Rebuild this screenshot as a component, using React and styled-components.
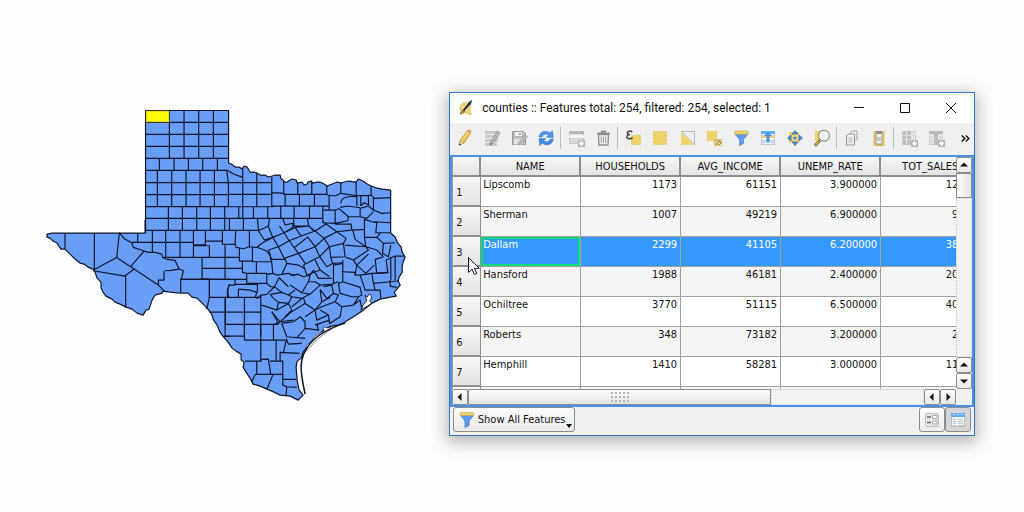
import React, { useState } from 'react'
import styled, { createGlobalStyle, css } from 'styled-components'

const rows = [
  { name: 'Lipscomb', households: 1173, income: 61151, rate: '3.900000', sales: 12482 },
  { name: 'Sherman', households: 1007, income: 49219, rate: '6.900000', sales: 9317 },
  { name: 'Dallam', households: 2299, income: 41105, rate: '6.200000', sales: 38264 },
  { name: 'Hansford', households: 1988, income: 46181, rate: '2.400000', sales: 20715 },
  { name: 'Ochiltree', households: 3770, income: 51115, rate: '6.500000', sales: 40538 },
  { name: 'Roberts', households: 348, income: 73182, rate: '3.200000', sales: 2046 },
  { name: 'Hemphill', households: 1410, income: 58281, rate: '3.000000', sales: 11930 },
]

const columns = ['NAME', 'HOUSEHOLDS', 'AVG_INCOME', 'UNEMP_RATE', 'TOT_SALES']

function App() {
  const [selected, setSelected] = useState(2)

  return (
    <>
      <GlobalStyle />
      <Page>
        <CountyMap />
        <Window>
          <TitleBar>
            <AppIcon />
            <Title>counties :: Features total: 254, filtered: 254, selected: 1</Title>
            <WindowButton aria-label="Minimize">
              <svg width="12" height="12" viewBox="0 0 12 12"><path d="M1 5.500h10" /></svg>
            </WindowButton>
            <WindowButton aria-label="Maximize">
              <svg width="12" height="12" viewBox="0 0 12 12"><path d="M1.500 1.500h9v9h-9z" /></svg>
            </WindowButton>
            <WindowButton aria-label="Close">
              <svg width="12" height="12" viewBox="0 0 12 12"><path d="M1 1l10 10M11 1L1 11" /></svg>
            </WindowButton>
          </TitleBar>

          <Toolbar />

          <Frame>
            <Viewport>
              <Table>
                <colgroup>
                  <col style={{ width: 28 }} />
                  {columns.map((c) => <col key={c} style={{ width: 100 }} />)}
                </colgroup>
                <thead>
                  <tr>
                    <HeadCell aria-label="Row" />
                    {columns.map((c) => <HeadCell key={c} scope="col">{c}</HeadCell>)}
                  </tr>
                </thead>
                <tbody>
                  {rows.map((row, i) => (
                    <Row key={row.name} $selected={i === selected} onClick={() => setSelected(i)}>
                      <RowHead scope="row">
                        {i + 1}
                        {i === 2 && <Cursor />}
                      </RowHead>
                      <Cell $current={i === selected}>{row.name}</Cell>
                      <Cell $number>{row.households}</Cell>
                      <Cell $number>{row.income}</Cell>
                      <Cell $number>{row.rate}</Cell>
                      <Cell $number>{row.sales}</Cell>
                    </Row>
                  ))}
                  <Row>
                    <RowHead />
                    {columns.map((c) => <Cell key={c} />)}
                  </Row>
                </tbody>
              </Table>
            </Viewport>
            <VerticalBar>
              <Arrow label="Scroll up" d="M4 9.500L8 5.500l4 4z" />
              <VerticalThumb />
              <Groove />
              <Arrow label="Page up" d="M4 9.500L8 5.500l4 4z" />
              <Arrow label="Scroll down" d="M4 6.500L8 10.500l4-4z" />
            </VerticalBar>
            <HorizontalBar>
              <Arrow label="Scroll left" d="M9.500 4L5.500 8l4 4z" />
              <HorizontalThumb>
                <Grip />
              </HorizontalThumb>
              <Groove />
              <Arrow label="Page left" d="M9.500 4L5.500 8l4 4z" />
              <Arrow label="Scroll right" d="M6.500 4L10.500 8l-4 4z" />
            </HorizontalBar>
          </Frame>

          <Footer>
            <FilterButton>
              <svg width="16" height="18" viewBox="0 0 16 18">
                <path d="M1.500 4.500L6 10v6.500l4-2V10l4.500-5.500z" fill="#5b9bf0" stroke="#5f88c2" />
                <rect x="1" y="1.500" width="14" height="3" rx="1" fill="#eed36c" stroke="#c9ad55" strokeWidth=".6" />
              </svg>
              Show All Features
              <MenuMark width="6" height="4" viewBox="0 0 6 4"><path d="M0 0h6L3 4z" /></MenuMark>
            </FilterButton>
            <ViewButtons>
              <ViewButton aria-label="Form view">
                <svg width="16" height="16" viewBox="0 0 16 16">
                  <rect x="1.500" y="1.500" width="13" height="13" rx="1" fill="#e6e6e6" stroke="#bdbdbd" />
                  <path d="M3 5h4M3 10.500h4" stroke="#5f6672" strokeWidth="1.600" />
                  <path d="M8.500 3.500h4.500v3H8.500zM8.500 9h4.500v3H8.500z" fill="#fff" stroke="#a9a9a9" />
                </svg>
              </ViewButton>
              <ViewButton aria-label="Table view" $pressed>
                <svg width="16" height="16" viewBox="0 0 16 16">
                  <rect x="1.500" y="1.500" width="13" height="13" fill="#f4f4f4" stroke="#b9bcc0" />
                  <path d="M1 1h14v4H1z" fill="#62aef7" />
                  <path d="M3 2.500h2M7 2.500h2M11 2.500h2" stroke="#c2e2ff" />
                  <path d="M3 7.500h3M3 9.500h3M3 11.500h3M3 13.500h3M8 7.500h5M8 9.500h5M8 11.500h5M8 13.500h5" stroke="#bfc5cb" />
                </svg>
              </ViewButton>
            </ViewButtons>
          </Footer>
        </Window>
      </Page>
    </>
  )
}

export default App

function Arrow({ label, d }) {
  return (
    <ArrowButton aria-label={label}>
      <svg width="16" height="16" viewBox="0 0 16 16"><path d={d} /></svg>
    </ArrowButton>
  )
}

function Cursor() {
  return (
    <CursorIcon width="14" height="20" viewBox="0 0 14 20">
      <path d="M1.500 1.500v15l3.500-3.400 2.400 5.400 2.400-1.100-2.300-5.100h4.800z" fill="#fff" stroke="#15182e" />
    </CursorIcon>
  )
}

function AppIcon() {
  return (
    <svg width="18" height="18" viewBox="0 0 18 18">
      <path d="M9 3.500C5 3 2.500 6.500 3 10c.5 3 3.200 4.500 6 4l4.500 2 1-1.800-2.200-1.200c2-2.500 1.500-7-.8-8.500z" fill="#efd574" stroke="#cdb04c" strokeWidth=".6" />
      <path d="M7 7.500c-2 1-2 4.300 0 4.800 2 .4 3.200-1.700 2.800-3.600" fill="#fff6c9" />
      <path d="M2.500 15.500c.4-2.500 2-4.300 3.800-5l2 1.400c-1 2-3 3.400-5.800 3.600z" fill="#a68534" />
      <path d="M6.500 11.500L13 4" stroke="#252d3b" strokeWidth="2" />
      <path d="M11 3.500L15 .8l-1 5.200z" fill="#1d4b56" />
    </svg>
  )
}

const yellow = '#eed36c'

function Badge() {
  return (
    <g>
      <rect x="12" y="12" width="7" height="7" fill="#b6b6b6" />
      <path d="M15.500 13v5M13 15.500h5M13.700 13.700l3.600 3.600M17.300 13.700l-3.600 3.600" stroke="#fff" />
    </g>
  )
}

const icons = {
  'Toggle editing': (
    <>
      <path d="M4 17l1.500-5L12.500 2.500l3.200 2.300L9 15z" fill="#efc355" stroke="#b98d3a" strokeWidth=".8" />
      <path d="M12.500 2.500l3.200 2.300.8-1.700-2.300-1.700z" fill="#d98f72" />
      <path d="M5.500 12l3.200 2.600L4 17.500z" fill="#f3e2bd" stroke="#8c7443" strokeWidth=".5" />
      <path d="M4 17.600l.5-2.200 1.500 1.200z" fill="#33302a" />
      <path d="M7.200 12.500L14 3.500" stroke="#f8df8e" />
    </>
  ),
  'Multi edit': (
    <>
      <path d="M3 4.500h13M3 8.500h13M3 12.500h13M3 16.500h12" stroke="#c9c9c9" strokeWidth="3" />
      <path d="M8 17l1-3.500L15.500 3 18 4.800 11.500 15z" fill="#b6b6b6" stroke="#8d8d8d" strokeWidth=".8" />
      <path d="M8 17l.5-2 1.400 1z" fill="#555" />
    </>
  ),
  'Save edits': (
    <>
      <path d="M3.500 3.500h11l2 2v11h-13z" fill="#b9b9b9" stroke="#999" />
      <path d="M6 4h7v4H6z" fill="#f2f2f2" />
      <path d="M10 5h2v2h-2z" fill="#999" />
      <path d="M5 10.500h9v6H5z" fill="#e3e3e3" />
      <path d="M9 17l1-3 6.500-7 2 1.500L12 16z" fill="#bdbdbd" stroke="#969696" strokeWidth=".7" />
    </>
  ),
  'Reload': (
    <>
      <path d="M3 9C3.500 3.500 9.500 1.500 13.800 4.700L16.500 2.500l.8 7-7-.2 2.200-2.200C9.800 5.500 7 6.500 6.200 9z" fill="#4b95ed" stroke="#3878ca" strokeWidth=".5" />
      <path d="M17.300 11c-.5 5.500-6.500 7.500-10.800 4.300L3.800 17.500 3 10.500l7 .2-2.200 2.200c2.700 1.600 5.500.6 6.300-1.900z" fill="#3f89e4" stroke="#3878ca" strokeWidth=".5" />
    </>
  ),
  'Add feature': (
    <>
      <rect x="3.500" y="3.500" width="14" height="12" fill="#e6e6e6" stroke="#c3c3c3" />
      <path d="M3 4.500h15" stroke="#b5b5b5" strokeWidth="3" />
      <path d="M3 8.500h15" stroke="#fafafa" strokeWidth="2" />
      <path d="M4 11h13M4 13.500h13" stroke="#c3c3c3" />
      <Badge />
    </>
  ),
  'Delete': (
    <>
      <path d="M5.500 6.500h10L15 17H6z" fill="#f1f1f1" stroke="#8e8e8e" strokeWidth="1.300" />
      <path d="M4 5.500h13M8.500 5V3.500h4V5" fill="none" stroke="#828282" strokeWidth="1.300" />
      <path d="M8.300 8.500v6.500M10.500 8.500v6.500M12.700 8.500v6.500" stroke="#9a9a9a" />
    </>
  ),
  'Select by expression': (
    <>
      <path d="M8 7h10v10H8z" fill={yellow} />
      <path d="M9.300 4C7.500 2.400 4.300 3 4.300 5c0 1.200 1 1.700 2.700 1.700-2.200 0-3.200.8-3.200 2 0 2.300 4 2.700 5.800.7" fill="none" stroke="#394150" strokeWidth="1.500" />
    </>
  ),
  'Select all': <path d="M3.500 3.500h13v13h-13z" fill={yellow} stroke="#e8cd68" strokeDasharray="3 1" />,
  'Invert selection': (
    <>
      <path d="M4.500 3.500h13v13z" fill="#f0f0f0" stroke="#b9bcbf" />
      <path d="M4 4l13 13H4z" fill={yellow} />
    </>
  ),
  'Deselect': (
    <>
      <path d="M3 3h10v10H3z" fill={yellow} />
      <path d="M10 11h8v7h-8z" fill="#e5c96f" />
      <path d="M11 13l2-1 3 3 2-1M12 17l4-5M15 17l2-3" fill="none" stroke="#a37c34" />
      <path d="M12 12l5 5" stroke="#fff6cf" />
    </>
  ),
  'Filter': (
    <>
      <path d="M4 6l4.500 5.500V17.500l4-2v-4L17 6z" fill="#5b9bf0" stroke="#5f88c2" strokeWidth=".8" />
      <rect x="3.500" y="3" width="14" height="3.200" rx="1" fill={yellow} stroke="#c9ad55" strokeWidth=".6" />
    </>
  ),
  'Move selection to top': (
    <>
      <rect x="3.500" y="3.500" width="13" height="13" fill="#eef3f8" stroke="#c9c9c9" />
      <path d="M3 3h14v3H3z" fill="#69b1f4" />
      <path d="M4 7h12v3H4z" fill={yellow} />
      <path d="M4 12.500h12M4 14.500h12" stroke="#a6c8ed" />
      <path d="M10 4l4 4h-2.500v6h-3V8H6z" fill="#4a90e0" />
    </>
  ),
  'Pan to selection': (
    <>
      <path d="M4 4h10v11H4z" fill={yellow} />
      <path d="M10 2.500l3 3.500H7zM10 17.500l3-3.500H7zM2.500 10L6 7v6zM17.500 10L14 7v6z" fill="#4a8de0" stroke="#3e6ca8" strokeWidth=".8" />
      <path d="M10 8l2 2-2 2-2-2z" fill="#4a8de0" />
    </>
  ),
  'Zoom to selection': (
    <>
      <path d="M3 3h10v10H3z" fill={yellow} />
      <path d="M3 17.500l5-5" stroke="#57502f" strokeWidth="2.800" />
      <path d="M3.500 17l4-4" stroke="#f1c331" strokeWidth="1.500" />
      <circle cx="12" cy="7.800" r="5.500" fill="#f1f2ea" stroke="#8f9488" strokeWidth="1.200" />
      <path d="M8.800 7.500c.3-1.800 1.500-2.700 3-2.800" fill="none" stroke="#fff" strokeWidth="1.300" />
    </>
  ),
  'Copy rows': (
    <>
      <path d="M8 5l2-2h5v9H8z" fill="#efefef" stroke="#a6a6a6" />
      <path d="M4.500 8l2-2h6v11h-8z" fill="#efefef" stroke="#999" />
      <path d="M6.500 10h4M6.500 12h4M6.500 14h4" stroke="#b4b4b4" />
    </>
  ),
  'Paste features': (
    <>
      <path d="M5 3.500h10v14H5z" fill={yellow} stroke="#d5b756" />
      <path d="M7 5.500h6v10.500H7z" fill="#f2f2f2" stroke="#96948a" />
      <path d="M7 3h6v2.500H7z" fill="#8d8d88" />
      <path d="M8 9h4v4H8z" fill="#c6c6c6" />
    </>
  ),
  'New field': (
    <>
      <path d="M3.500 3.500h13v13h-13z" fill="#e8e8e8" stroke="#cdcdcd" />
      <path d="M4 3h3v14H4zM8 3h4v14H8z" fill="#bebebe" />
      <path d="M3 7.500h14M3 11.500h14" stroke="#dcdcdc" />
      <Badge />
    </>
  ),
  'Delete field': (
    <>
      <path d="M3.500 3.500h13v13h-13z" fill="#e3e3e3" stroke="#cdcdcd" />
      <path d="M8 3h4v14H8zM3 3h14v3H3z" fill="#b9b9b9" />
      <path d="M3 9.500h14M3 13h14" stroke="#cfcfcf" />
      <Badge />
    </>
  ),
}

const groups = [
  ['Toggle editing', 'Multi edit', 'Save edits', 'Reload'],
  ['Add feature', 'Delete'],
  ['Select by expression', 'Select all', 'Invert selection', 'Deselect', 'Filter',
    'Move selection to top', 'Pan to selection', 'Zoom to selection'],
  ['Copy rows', 'Paste features'],
  ['New field', 'Delete field'],
]

function Toolbar() {
  return (
    <Tools>
      {groups.map((group) => (
        <ToolGroup key={group[0]}>
          {group.map((label) => (
            <ToolButton key={label} aria-label={label}>
              <svg width="20" height="20" viewBox="0 0 20 20">{icons[label]}</svg>
            </ToolButton>
          ))}
        </ToolGroup>
      ))}
      <MoreButton aria-label="More tools">
        <svg width="9" height="7" viewBox="0 0 9 7">
          <path d="M.8.5l3 3-3 3M4.800.5l3 3-3 3" fill="none" stroke="#111" strokeWidth="1.400" />
        </svg>
      </MoreButton>
    </Tools>
  )
}

const state = `M145.500 110.500H228.500V163
  L231 164 235 167 239 167 242 169 244 166 247 167 250 172 254 172 257 173 260 175 265 175 268 177 272 176 275 175 280 175
  281 179 283 180 284 182 287 182 290 180 292 179 296 180 297 183 302 182 304 185 307 184 308 182 311 181 312 183 317 182 320 182
  324 184 327 186 332 184 337 182 341 183 348 181 356 182 358 179 363 181 367 184 371 186 377 188 382 189 390.500 190V233
  L395 237 397 242 401 247 402 252 405 257 403 262 402 266 402 272 399 277 398 281 400 285 396 290 394 292 396 296
  390 297 380 299 372 303 367 307 362 311 353 317 343 323 338 325 331 326 324 329 320 334 316 337 312 341 307 347 303 352
  301 358 297 361 296 367 297 380 299 390 303 395 301 397 298 400 290 396 280 395 274 392 267 389 260 386 253 384
  250 378 246 372 243 367 244 362 241 360 241 354 236 351 232 348 228 342 222 335 219 330 217 325 213 319 212 315
  208 309 203 304 197 298 192 297 188 293 180 293 170 292 163 291 162 293 155 295 152 300 151 303 149 309 146 310
  143 315 137 313 132 309 126 307 120 304 115 302 112 299 106 296 103 292 101 288 101 282 97 278 95 272 93 269
  88 267 84 264 80 263 75 259 70 254 65 249 61 249 59 246 57 243 53 241 50 238 47 237 47 234 52 233 145.500 233z`

// County borders, one path per part of the state, drawn on a grid three times as fine.
const borders = [
  {
    at: 'translate(30 100)',
    d: 'M345 67H595M345 103H595M345 139H595M345 175H595M345 211H595M345 248H595M345 284H595M345 320H595M345 355H595M418 31V175M462 31V175M506 31V175M550 31V175M388 175V211M432 175V211M475 175V211M518 175V211M562 175V211M382 211V320M425 211V320M468 211V320M510 211V320M553 211V320M590 211L595 249V320M415 320V391M457 320V391M500 320V391M541 320V391M584 320V391',
  },
  {
    at: 'translate(30 220)',
    d: 'M345 0V38M345 31H450M105 40V86M193 40V148M268 38L260 112L193 148M260 112L385 195L403 213M190 152L285 168L312 147M303 138L343 92M287 168V262M268 38L282 55L305 68L310 82L340 92L355 97L375 97L395 102L398 112L408 117L435 121L447 147L460 152L458 160L455 175M405 152L422 151L447 147M402 152V180H385V193M323 40V67M305 67H491M367 31V95M407 31V112M450 31V112M400 112H450M452 178H600M452 175V218M538 178V232L530 268M598 192L592 210V232M578 349H600',
  },
  {
    at: 'translate(220 150)',
    d: 'M25 62L40 72L68 82M68 55V205M110 70V170M155 80V170M25 98H155M25 133H155M25 170H155L180 168M25 205H150M56 170V205M100 170V205M143 170V205M28 205V240M70 205V240M112 205L115 240M155 128L193 130M191 92V133H320M233 98V133M275 92V133M320 106V135M195 133V168M238 133V168M283 133V168M155 168H327M182 168V203M222 168V203M268 168V203M308 168V218M148 205H308M308 180H345L358 176M327 135V180M320 135L345 138L365 128M362 98V130L410 137L445 136L453 135M408 95V136M453 108V135L462 145L511 143M362 160C363 140 385 138 410 140M410 138V168M383 168L420 173M422 138V168M445 135V165M422 167L432 158L445 165M460 145V180L485 190L511 188M459 180L445 168L420 175V200L440 205L460 185M355 175L365 183L385 200H418M360 172L383 168M433 262V208L455 215L470 218L467 248H511M460 215L511 218M433 262H470L480 250M345 180V218M385 200L383 212L345 220L308 218M345 222H393L395 240L433 238M262 205L265 225L281 243M308 215L318 222M220 205L222 228L262 228M188 205L195 225L218 220V232L192 248L178 228M148 205L145 228L115 242L133 270L158 262L145 230M108 293L128 278L158 262L192 248L225 232L262 228M145 300L175 290L207 272L243 258L285 243L318 222M192 325L235 310L285 290L312 265L350 245L393 240M250 345L298 320L328 290L370 280L378 265L350 245L318 222M158 262L175 290L192 325M192 248L207 272L235 310L255 340M225 232L243 258M262 260L285 290L300 322L320 350L337 340M262 226L285 243L312 265L328 290L332 322L375 320L370 280M222 293L262 262M145 300L155 330M332 322L337 340L365 338M375 285L437 290L433 262M398 240L405 268L437 290L445 300L400 330L378 322M437 290L470 300L490 320M470 262L490 280L525 278M490 280L487 310L505 320L512 285M400 330L410 345L445 312M490 320L465 328L470 370L503 368L498 330L525 318H550M512 320V390M525 318V390M410 345L437 370L462 345M410 345L405 375M250 345L260 375L300 360L285 330M300 360L328 380',
  },
  {
    at: 'translate(180 215)',
    d: 'M0 46H235M40 46V127M76 46V89H41M76 78H127M127 46V87L165 88L167 48M41 92H88V127M135 87V193M165 88L168 97L190 101L208 95L235 98L260 108L270 120L272 133M208 46V95M178 97V138H217V98M217 132V140H275M187 138V172L200 175V205H260V175H200M229 142V175M0 127H178M66 127V193M66 160H187M0 193H200M88 247H240M136 247V328M193 247V360M242 240V360M88 291H242M136 328H280M145 245L143 225L147 210H165V193M165 208H232V232M175 222V247M175 222L210 225L230 232L226 245L232 250L242 240M275 142L272 133H315M275 142L278 175L260 178M315 130L320 145L305 178L290 180L278 175M320 145L355 150L375 162M305 178L325 175L345 183M297 188L283 215L260 238L242 240M297 188L325 215M260 205L272 215H283M270 238L305 232L283 215M305 232L325 240M270 238L280 250L295 262L290 285L245 270M295 262L325 265L335 245L325 240L345 225M335 245L365 250M275 290L300 320L340 315M290 285L325 265L335 285L315 305M280 328L300 320',
  },
  {
    at: 'translate(290 210)',
    d: 'M0 195L25 193L40 200L60 195L70 180M60 195L55 215L35 248L0 225M55 215H75L90 225L60 252L35 248M90 225L130 222M70 180L85 205H125M100 230L125 225L130 250L110 265L90 238M60 252L40 262L45 280L75 300L95 275L90 240M40 262L5 290M95 275L120 262M130 250L145 255L135 275L95 290L75 300M135 275L155 290L150 320L118 340L115 315L90 300M155 290L190 285L205 260L185 260L150 250L145 220L158 215L210 232L215 255L205 260M210 195L225 240H270L272 265M190 285L210 270L215 298M130 160V220L145 215M158 150V215M130 165L158 160M155 185L195 187V195H210L245 190L250 220L255 240M250 220L300 215L325 212M245 190L295 187M300 210V228L320 232M75 300L80 330L115 315',
  },
  {
    at: 'translate(200 270)',
    d: 'M0 27H28V82M75 198H133M133 165V210M182 163V275M133 210H255M75 80V198M220 163V210M228 210V273M220 163H235M135 273H185M170 273V313M182 268L205 267L212 313M210 273H250M165 313H250M165 313L155 335M218 315L200 358M248 273V345L260 350L258 375M250 328H288M260 350L290 352M240 273V247L298 250M250 247L255 225L258 210M245 160L260 200L315 205M258 205L265 222L305 220M245 160L280 155L300 140L315 155V175L290 203M315 175L355 180L350 160M215 125L235 160L270 128L315 100M315 140L345 120M388 150L345 165',
  },
]

function CountyMap() {
  return (
    <MapArt viewBox="40 100 370 310" role="img" aria-label="Texas counties">
      <path d={state} fill="#689ef5" stroke="#10142a" strokeWidth="1.200" strokeLinejoin="round" />
      <g fill="none" stroke="#10142a" strokeLinejoin="round">
        {borders.map((part) => (
          <path key={part.at} transform={`${part.at} scale(.3333)`} strokeWidth="3.500" d={part.d} />
        ))}
      </g>
      <path d="M146 111h23v11h-23z" fill="#fbfb06" stroke="#b98a32" strokeWidth=".6" />
      <g fill="#fdfdfd" stroke="#10142a" strokeWidth=".9">
        <path d="M365 295l2 2 2-3 2 1 .5 3-2 3 2 2-4 3-4 2-3 2 3-6 3-3z" />
        <path d="M331 327l-3 1-5-1 1 4-6 3-4 3-3 5-5 3 1 3-3 5 6-6 6-7 8-6 6-4z" strokeWidth=".5" />
      </g>
      <path d="M345 323c-7 2-9 3-13 5-19 8-31 22-31 39 0 9 2 18 4 27" fill="none" stroke="#10142a" strokeWidth="1.500" />
    </MapArt>
  )
}

const GlobalStyle = createGlobalStyle`
  * {
    box-sizing: border-box;
  }
  body {
    margin: 0;
    background: #fdfdfd;
    color: #111;
    font-family: "DejaVu Sans Condensed", "DejaVu Sans", sans-serif;
    font-size: 11px;
  }
  button {
    font: inherit;
    color: inherit;
    margin: 0;
    padding: 0;
    border: none;
    background: none;
    display: flex;
    align-items: center;
    justify-content: center;
  }
`

const Page = styled.main`
  display: flex;
  align-items: flex-start;
  gap: 39px;
  min-height: 100vh;
  padding: 92px 49px 0 40px;
  overflow: hidden;
`

const MapArt = styled.svg`
  flex: 371 1 0;
  min-width: 0;
  margin-top: 8px;
`

const Window = styled.section`
  flex: 525 1 0;
  min-width: 0;
  border: 1px solid #2f78c8;
  background: #f0f0f0;
  box-shadow: 0 4px 16px 2px rgba(0, 0, 0, 0.3);
`

const TitleBar = styled.header`
  display: flex;
  align-items: center;
  height: 30px;
  padding-left: 7px;
  background: #fff;
`

const Title = styled.h1`
  flex: 1;
  margin: 0 0 0 7px;
  font-family: Roboto, sans-serif;
  font-size: 12px;
  font-weight: 400;
  white-space: nowrap;
`

const WindowButton = styled.button`
  width: 46px;
  height: 30px;

  svg {
    fill: none;
    stroke: #111;
  }
`

const Tools = styled.div`
  display: flex;
  align-items: center;
  height: 32px;
  padding: 0 0 2px 1px;
`

const ToolGroup = styled.div`
  display: flex;
  align-items: center;

  & + &::before {
    content: "";
    width: 1px;
    height: 22px;
    margin: 0 1px;
    background: #bdbdbd;
  }
`

const ToolButton = styled.button`
  width: 27px;
  height: 27px;
`

const MoreButton = styled.button`
  width: 18px;
  height: 27px;
  margin-left: auto;
`

const Frame = styled.div`
  display: grid;
  grid-template-columns: minmax(0, 1fr) 16px;
  border: 2px solid #4a90e4;
`

const Viewport = styled.div`
  height: 232px;
  overflow: hidden;
  border-left: 1px solid #999;
  background: #fff;
`

const Table = styled.table`
  width: 528px;
  table-layout: fixed;
  border-spacing: 0;
`

const HeadCell = styled.th`
  height: 20px;
  padding: 2px 0 0;
  border-right: 2px solid #8f8f8f;
  border-bottom: 2px solid #8f8f8f;
  background: linear-gradient(#f7f7f7, #e4e4e4);
  font-weight: 400;
  line-height: 16px;
`

const RowHead = styled.th`
  position: relative;
  height: 30px;
  padding: 2px 0 0 3px;
  border-right: 1px solid #8f8f8f;
  border-bottom: 2px solid #8f8f8f;
  background: linear-gradient(#f7f7f7, #e4e4e4);
  font-weight: 400;
  text-align: left;
`

const Cell = styled.td`
  height: 30px;
  padding: 0 3px 0 2px;
  border-right: 1px solid #a0a0a0;
  border-bottom: 1px solid #a0a0a0;
  line-height: 15px;
  vertical-align: top;
  text-align: ${(props) => (props.$number ? 'right' : 'left')};
  ${(props) => props.$current && css`
    box-shadow: inset 0 0 0 2px #0bdc78;
  `}
`

const Row = styled.tr`
  &:nth-child(even) ${Cell} {
    background: #f5f5f5;
  }
  ${(props) => props.$selected && css`
    & ${Cell} {
      background: #3399ff;
      color: #fff;
    }
  `}
`

const CursorIcon = styled.svg`
  position: absolute;
  left: 14px;
  top: 19px;
  z-index: 2;
`

const VerticalBar = styled.div`
  display: flex;
  flex-direction: column;
`

const HorizontalBar = styled.div`
  display: flex;
`

const ArrowButton = styled.button`
  flex: none;
  width: 16px;
  height: 16px;
  border: 1px solid #8c8c8c;
  border-radius: 2px;
  background: linear-gradient(#fdfdfd, #e8e8e8);

  svg {
    flex: none;
    fill: #111;
  }
`

const VerticalThumb = styled.div`
  height: 25px;
  border: 1px solid #8c8c8c;
  background: linear-gradient(90deg, #fdfdfd, #e4e4e4);
`

const HorizontalThumb = styled.div`
  flex: 304 1 0;
  display: flex;
  align-items: center;
  justify-content: center;
  border: 1px solid #8c8c8c;
  background: linear-gradient(#fdfdfd, #e4e4e4);
`

const Grip = styled.div`
  width: 20px;
  height: 12px;
  background: radial-gradient(circle, #b5b5b5 1px, transparent 1px) 0 0 / 4px 4px;
`

const Groove = styled.div`
  flex: 152 1 0;
  border: 1px dotted #cfcfcf;
  background: repeating-conic-gradient(#ececec 0 25%, #fafafa 0 50%) 0 0 / 2px 2px;
`

const Footer = styled.footer`
  display: flex;
  justify-content: space-between;
  height: 28px;
  padding: 0 3px;
`

const FilterButton = styled.button`
  position: relative;
  width: 122px;
  height: 25px;
  gap: 3px;
  padding-right: 4px;
  border: 1px solid #8c8c8c;
  border-radius: 3px;
  background: linear-gradient(#fcfcfc, #e9e9e9);
  white-space: nowrap;
`

const MenuMark = styled.svg`
  position: absolute;
  right: 2px;
  bottom: 3px;
`

const ViewButtons = styled.div`
  display: flex;
`

const ViewButton = styled.button`
  width: 26px;
  height: 25px;
  border: 1px solid #8c8c8c;
  border-radius: 3px;
  background: ${(props) => (props.$pressed ? '#d6d6d6' : 'linear-gradient(#fcfcfc, #ececec)')};
`
